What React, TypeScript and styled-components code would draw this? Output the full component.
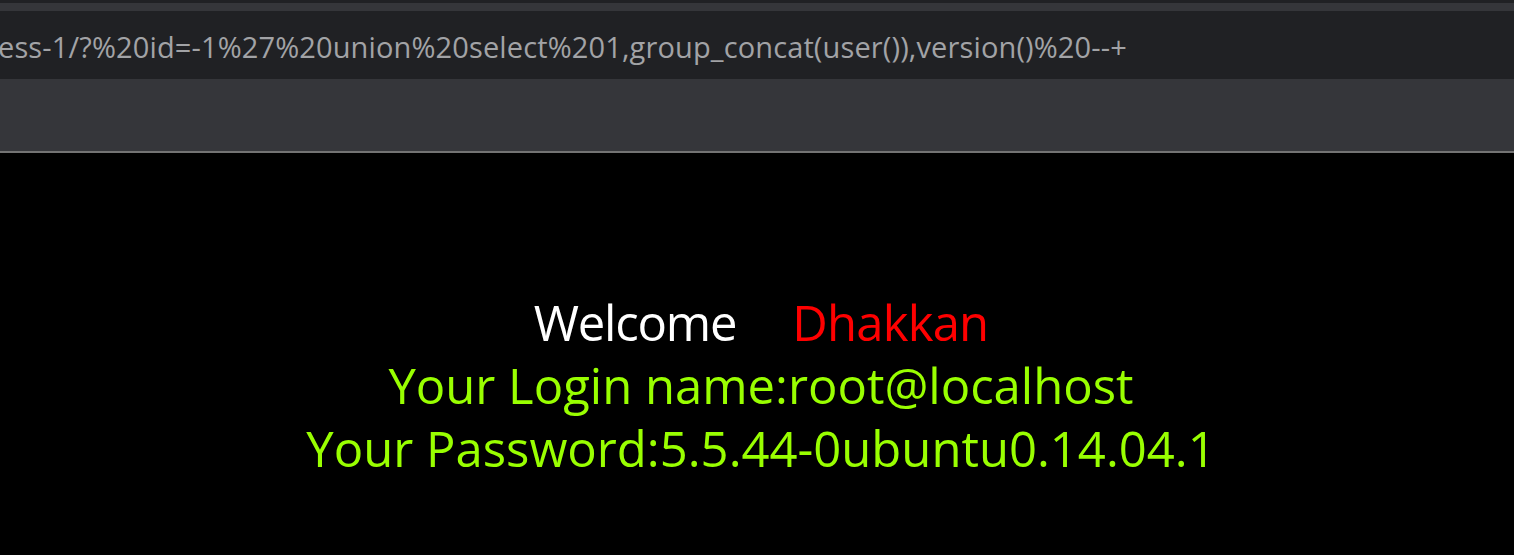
import React from "react";
import styled, { createGlobalStyle } from "styled-components";

const Global = createGlobalStyle`
  html, body {
    margin: 0;
    padding: 0;
    background: #000;
    overflow: hidden;
  }
  #root {
    width: 1514px;
    height: 555px;
  }
`;

const Page = styled.div`
  display: flex;
  flex-direction: column;
  width: 1514px;
  height: 555px;
  background: #000;
  overflow: hidden;
`;

const TopEdge = styled.div`
  height: 3px;
  background: #202124;
`;

const TabStrip = styled.div`
  height: 8px;
  background: #35363a;
`;

const UrlBar = styled.div`
  box-sizing: border-box;
  height: 68px;
  padding-top: 3px;
  background: #202124;
  display: flex;
  align-items: center;
  overflow: hidden;
  white-space: nowrap;
`;

const UrlText = styled.span`
  font-family: "Open Sans", "Noto Sans", sans-serif;
  font-size: 29px;
  letter-spacing: 0.13px;
  color: #a2a3a6;
  margin-left: -2px;
`;

const Toolbar = styled.div`
  height: 72px;
  background: #35363a;
  border-bottom: 2px solid #737373;
`;

const Content = styled.div`
  flex: 1;
  display: flex;
  flex-direction: column;
  align-items: center;
  padding-top: 138px;
  padding-left: 8px;
  font-family: "Open Sans", "Noto Sans", sans-serif;
  font-size: 49px;
  line-height: 63px;
`;

const Line = styled.div<{ $color: string }>`
  color: ${(p) => p.$color};
  white-space: pre;
`;

const Greeting = styled.span`
  letter-spacing: -1.2px;
`;

const Gap = styled.span`
  letter-spacing: 1.3px;
`;

const Name = styled.span`
  color: #ff0000;
  letter-spacing: -0.8px;
`;

export default function App() {
  return (
    <>
      <Global />
      <Page>
        <TopEdge />
        <TabStrip />
        <UrlBar>
          <UrlText>
            ess-1/?%20id=-1%27%20union%20select%201,group_concat(user()),version()%20--+
          </UrlText>
        </UrlBar>
        <Toolbar />
        <Content>
          <Line $color="#ffffff">
            <Greeting>Welcome</Greeting>
            <Gap>{"\u00a0\u00a0\u00a0 "}</Gap>
            <Name>Dhakkan</Name>
          </Line>
          <Line $color="#99ff00">Your Login name:root@localhost</Line>
          <Line $color="#99ff00">Your Password:5.5.44-0ubuntu0.14.04.1</Line>
        </Content>
      </Page>
    </>
  );
}
